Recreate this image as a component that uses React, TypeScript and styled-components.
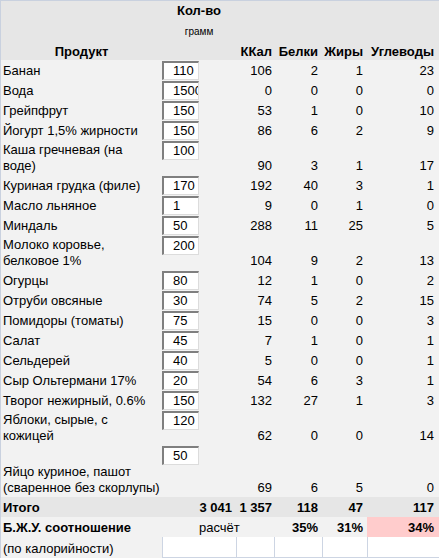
import React from 'react';
import styled, { createGlobalStyle } from 'styled-components';

const ROWS = [
  { name: ['Банан'], qty: '110', kcal: 106, p: 2, f: 1, c: 23, h: 20 },
  { name: ['Вода'], qty: '1500', kcal: 0, p: 0, f: 0, c: 0, h: 20 },
  { name: ['Грейпфрут'], qty: '150', kcal: 53, p: 1, f: 0, c: 10, h: 20 },
  { name: ['Йогурт 1,5% жирности'], qty: '150', kcal: 86, p: 6, f: 2, c: 9, h: 20 },
  { name: ['Каша гречневая (на', 'воде)'], qty: '100', kcal: 90, p: 3, f: 1, c: 17, h: 35 },
  { name: ['Куриная грудка (филе)'], qty: '170', kcal: 192, p: 40, f: 3, c: 1, h: 20 },
  { name: ['Масло льняное'], qty: '1', kcal: 9, p: 0, f: 1, c: 0, h: 20 },
  { name: ['Миндаль'], qty: '50', kcal: 288, p: 11, f: 25, c: 5, h: 20 },
  { name: ['Молоко коровье,', 'белковое 1%'], qty: '200', kcal: 104, p: 9, f: 2, c: 13, h: 35 },
  { name: ['Огурцы'], qty: '80', kcal: 12, p: 1, f: 0, c: 2, h: 20 },
  { name: ['Отруби овсяные'], qty: '30', kcal: 74, p: 5, f: 2, c: 15, h: 20 },
  { name: ['Помидоры (томаты)'], qty: '75', kcal: 15, p: 0, f: 0, c: 3, h: 20 },
  { name: ['Салат'], qty: '45', kcal: 7, p: 1, f: 0, c: 1, h: 20 },
  { name: ['Сельдерей'], qty: '40', kcal: 5, p: 0, f: 0, c: 1, h: 20 },
  { name: ['Сыр Ольтермани 17%'], qty: '20', kcal: 54, p: 6, f: 3, c: 1, h: 20 },
  { name: ['Творог нежирный, 0.6%'], qty: '150', kcal: 132, p: 27, f: 1, c: 3, h: 20 },
  { name: ['Яблоки, сырые, с', 'кожицей'], qty: '120', kcal: 62, p: 0, f: 0, c: 14, h: 35 },
  { name: ['Яйцо куриное, пашот', '(сваренное без скорлупы)'], qty: '50', kcal: 69, p: 6, f: 5, c: 0, h: 52 },
];

const COLS = [161, 74, 38, 48, 45, 72];

const GlobalStyle = createGlobalStyle`
  html, body {
    margin: 0;
    padding: 0;
    background: #f2f2f2;
  }
`;

const Frame = styled.div`
  width: 438px;
  border-top: 1px solid #c9d1df;
  border-left: 1px solid #c9d1df;
  font-family: "Liberation Sans", Arial, sans-serif;
  font-size: 13px;
  color: #000;
`;

const Sheet = styled.table`
  width: 438px;
  table-layout: fixed;
  border-collapse: separate;
  border-spacing: 0;
`;

const Col = styled.col<{ $w: number }>`
  width: ${p => p.$w}px;
`;

const Row = styled.tr<{ $h: number; $bg?: string }>`
  height: ${p => p.$h}px;
  background: ${p => p.$bg || '#f2f2f2'};
`;

const HeadCell = styled.th<{ $align?: string; $pr?: number }>`
  padding: 0 ${p => p.$pr ?? 0}px 0 0;
  vertical-align: bottom;
  text-align: ${p => p.$align || 'right'};
  font-weight: bold;
  line-height: 16px;
  white-space: nowrap;
`;

const QtyHead = styled.th`
  padding: 2px 0 0;
  vertical-align: top;
  text-align: center;
  font-weight: bold;
  line-height: 16px;
`;

const Unit = styled.div`
  margin-top: 7px;
  font-size: 10px;
  font-weight: normal;
  line-height: 12px;
`;

const NameCell = styled.td<{ $bold?: boolean }>`
  padding: 0 0 1px 2px;
  vertical-align: bottom;
  line-height: 16px;
  white-space: nowrap;
  font-weight: ${p => (p.$bold ? 'bold' : 'normal')};
`;

const QtyCell = styled.td`
  padding: 1px 0 0;
  vertical-align: top;
`;

const QtyBox = styled.div`
  box-sizing: border-box;
  width: 37px;
  height: 19px;
  padding-left: 9px;
  background: #fff;
  border-style: solid;
  border-width: 2px 1px 1px 2px;
  border-color: #7f7f7f #dcdcdc #dcdcdc #7f7f7f;
  line-height: 16px;
  white-space: nowrap;
  overflow: hidden;
`;

const NumCell = styled.td<{ $pr: number; $bold?: boolean; $bg?: string }>`
  padding: 0 ${p => p.$pr}px 1px 0;
  vertical-align: bottom;
  text-align: right;
  line-height: 16px;
  white-space: nowrap;
  font-weight: ${p => (p.$bold ? 'bold' : 'normal')};
  background: ${p => p.$bg || 'transparent'};
`;

const NoteCell = styled.td`
  padding: 0 0 1px 37px;
  vertical-align: bottom;
  line-height: 16px;
  white-space: nowrap;
`;

const BlankCell = styled.td`
  background: #fff;
  box-shadow: inset 1px 0 #cdd5e3, inset 0 -1px #cdd5e3;
`;

const PAD = [4, 2, 4, 4, 5];

const App = () => {
  return (
    <>
      <GlobalStyle />
      <Frame>
        <Sheet>
          <colgroup>
            {COLS.map((w, i) => <Col key={i} $w={w} />)}
          </colgroup>
          <tbody>
            <Row $h={59} $bg="#e6e6e6">
              <HeadCell $align="center">Продукт</HeadCell>
              <QtyHead>
                Кол-во
                <Unit>грамм</Unit>
              </QtyHead>
              <HeadCell $pr={PAD[1]}>ККал</HeadCell>
              <HeadCell $pr={PAD[2]}>Белки</HeadCell>
              <HeadCell $pr={PAD[3]}>Жиры</HeadCell>
              <HeadCell $pr={PAD[4]}>Углеводы</HeadCell>
            </Row>

            {ROWS.map(r => (
              <Row key={r.name[0]} $h={r.h}>
                <NameCell>
                  {r.name.map((line, i) => (
                    <React.Fragment key={i}>
                      {i > 0 && <br />}
                      {line}
                    </React.Fragment>
                  ))}
                </NameCell>
                <QtyCell>
                  <QtyBox>{r.qty}</QtyBox>
                </QtyCell>
                <NumCell $pr={PAD[1]}>{r.kcal}</NumCell>
                <NumCell $pr={PAD[2]}>{r.p}</NumCell>
                <NumCell $pr={PAD[3]}>{r.f}</NumCell>
                <NumCell $pr={PAD[4]}>{r.c}</NumCell>
              </Row>
            ))}

            <Row $h={20} $bg="#e6e6e6">
              <NameCell $bold>Итого</NameCell>
              <NumCell $pr={PAD[0]} $bold>3 041</NumCell>
              <NumCell $pr={PAD[1]} $bold>1 357</NumCell>
              <NumCell $pr={PAD[2]} $bold>118</NumCell>
              <NumCell $pr={PAD[3]} $bold>47</NumCell>
              <NumCell $pr={PAD[4]} $bold>117</NumCell>
            </Row>

            <Row $h={20}>
              <NameCell $bold>Б.Ж.У. соотношение</NameCell>
              <NoteCell>расчёт</NoteCell>
              <NumCell $pr={PAD[1]} />
              <NumCell $pr={PAD[2]} $bold>35%</NumCell>
              <NumCell $pr={PAD[3]} $bold>31%</NumCell>
              <NumCell $pr={PAD[4]} $bold $bg="#ffcccc">34%</NumCell>
            </Row>

            <Row $h={21}>
              <NameCell>(по калорийности)</NameCell>
              <BlankCell />
              <BlankCell />
              <BlankCell />
              <BlankCell />
              <BlankCell />
            </Row>
          </tbody>
        </Sheet>
      </Frame>
    </>
  );
};

export default App;
